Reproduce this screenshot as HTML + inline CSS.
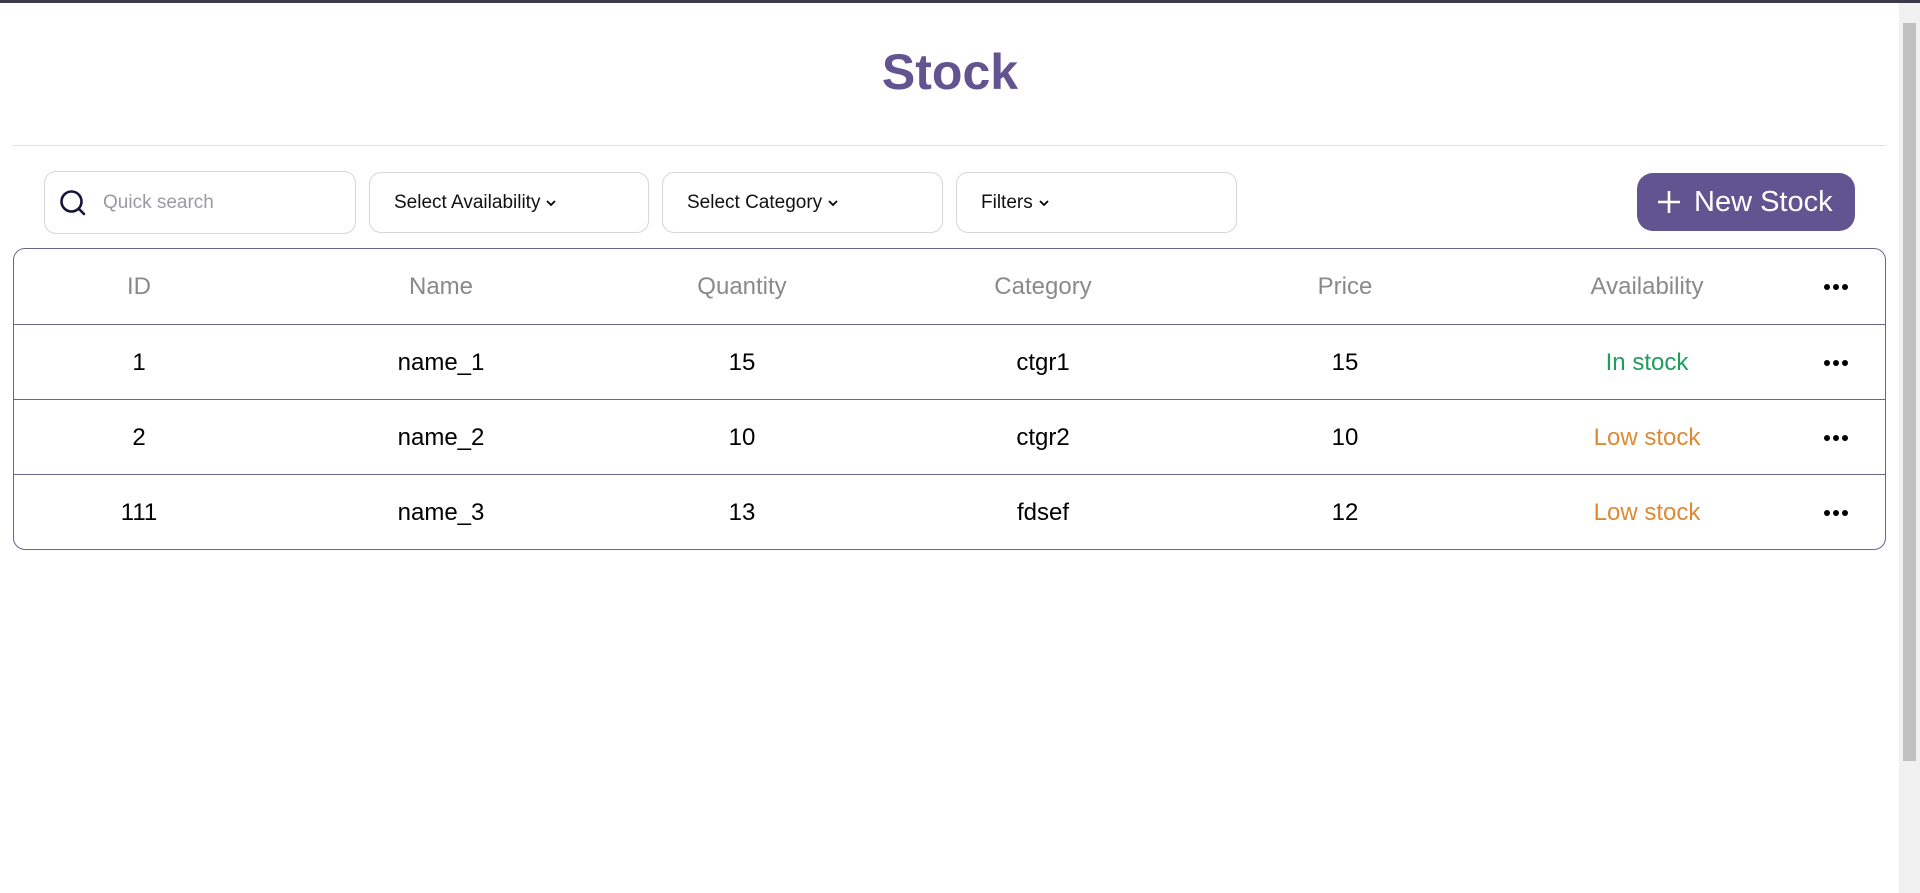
<!DOCTYPE html>
<html><head><meta charset="utf-8"><style>
*{box-sizing:border-box;margin:0;padding:0}
body{width:1920px;height:893px;overflow:hidden;background:#fff;font-family:"Liberation Sans",Arial,sans-serif;position:relative}
.topbar{position:absolute;left:0;top:0;width:1920px;height:3px;background:#3b3a4a}
.sb{position:absolute;right:0;top:3px;width:21px;height:890px;background:#f1f1f1}
.thumb{position:absolute;left:4px;top:20px;width:13px;height:738px;background:#c1c1c1}
h1{position:absolute;left:0;width:1900px;top:43px;text-align:center;font-size:50px;font-weight:bold;color:#625490}
.hr{position:absolute;left:12px;top:145px;width:1874px;height:1px;background:#e3e3ea}
.box{position:absolute;top:172px;height:61px;border:1px solid #d6d6da;border-radius:12px;font-size:19px;color:#111;display:flex;align-items:center;padding-left:24px}
.box svg{margin-left:5px}
.btn{position:absolute;left:1637px;top:173px;width:218px;height:58px;background:#625490;border-radius:16px;color:#fff;font-size:29px;display:flex;align-items:center;padding-left:20px}
.tbl{position:absolute;left:13px;top:248px;width:1873px;height:302px;border:1px solid #6b6585;border-radius:12px;overflow:hidden}
.row{position:absolute;left:0;width:100%;height:75px;border-top:1px solid #6b6585}
.c{position:absolute;top:0;height:75px;line-height:75px;width:300px;margin-left:-150px;text-align:center;font-size:24px;color:#000}
.h .c{color:#8a8a8a}
.dots{position:absolute;top:0;height:75px;left:1810px;width:24px;display:flex;align-items:center;justify-content:space-between}
.dots i{width:6px;height:6px;border-radius:50%;background:#000;display:block}
</style></head><body>
<div class="topbar"></div>
<div class="sb"><div class="thumb"></div></div>
<h1>Stock</h1>
<div class="hr"></div>
<div class="box" style="left:44px;top:171px;width:312px;height:63px;padding-left:14px;color:#9a9aa2">
<svg width="28" height="28" viewBox="0 0 28 28" style="margin:0 16px 0 0"><circle cx="12.5" cy="12.5" r="10" fill="none" stroke="#15143a" stroke-width="2.6"/><line x1="20" y1="20" x2="25" y2="25" stroke="#15143a" stroke-width="2.6" stroke-linecap="round"/></svg>Quick search</div>
<div class="box" style="left:369px;width:280px">Select Availability<svg width="12" height="8" viewBox="0 0 12 8"><path d="M2 2l4 4 4-4" fill="none" stroke="#000" stroke-width="1.8"/></svg></div>
<div class="box" style="left:662px;width:281px">Select Category<svg width="12" height="8" viewBox="0 0 12 8"><path d="M2 2l4 4 4-4" fill="none" stroke="#000" stroke-width="1.8"/></svg></div>
<div class="box" style="left:956px;width:281px">Filters<svg width="12" height="8" viewBox="0 0 12 8"><path d="M2 2l4 4 4-4" fill="none" stroke="#000" stroke-width="1.8"/></svg></div>
<div class="btn"><svg width="24" height="24" viewBox="0 0 24 24" style="margin-right:13px"><path d="M12 1v22M1 12h22" stroke="#fff" stroke-width="2.6"/></svg>New Stock</div>
<div class="tbl">
<div class="row h" style="top:0;border-top:none"><div class="c" style="left:125px">ID</div><div class="c" style="left:427px">Name</div><div class="c" style="left:728px">Quantity</div><div class="c" style="left:1029px">Category</div><div class="c" style="left:1331px">Price</div><div class="c" style="left:1633px">Availability</div><div class="dots"><i></i><i></i><i></i></div></div>
<div class="row" style="top:75px"><div class="c" style="left:125px">1</div><div class="c" style="left:427px">name_1</div><div class="c" style="left:728px">15</div><div class="c" style="left:1029px">ctgr1</div><div class="c" style="left:1331px">15</div><div class="c" style="left:1633px;color:#1f9d5b">In stock</div><div class="dots"><i></i><i></i><i></i></div></div>
<div class="row" style="top:150px"><div class="c" style="left:125px">2</div><div class="c" style="left:427px">name_2</div><div class="c" style="left:728px">10</div><div class="c" style="left:1029px">ctgr2</div><div class="c" style="left:1331px">10</div><div class="c" style="left:1633px;color:#dd8a35">Low stock</div><div class="dots"><i></i><i></i><i></i></div></div>
<div class="row" style="top:225px"><div class="c" style="left:125px">111</div><div class="c" style="left:427px">name_3</div><div class="c" style="left:728px">13</div><div class="c" style="left:1029px">fdsef</div><div class="c" style="left:1331px">12</div><div class="c" style="left:1633px;color:#dd8a35">Low stock</div><div class="dots"><i></i><i></i><i></i></div></div>
</div>
</body></html>
